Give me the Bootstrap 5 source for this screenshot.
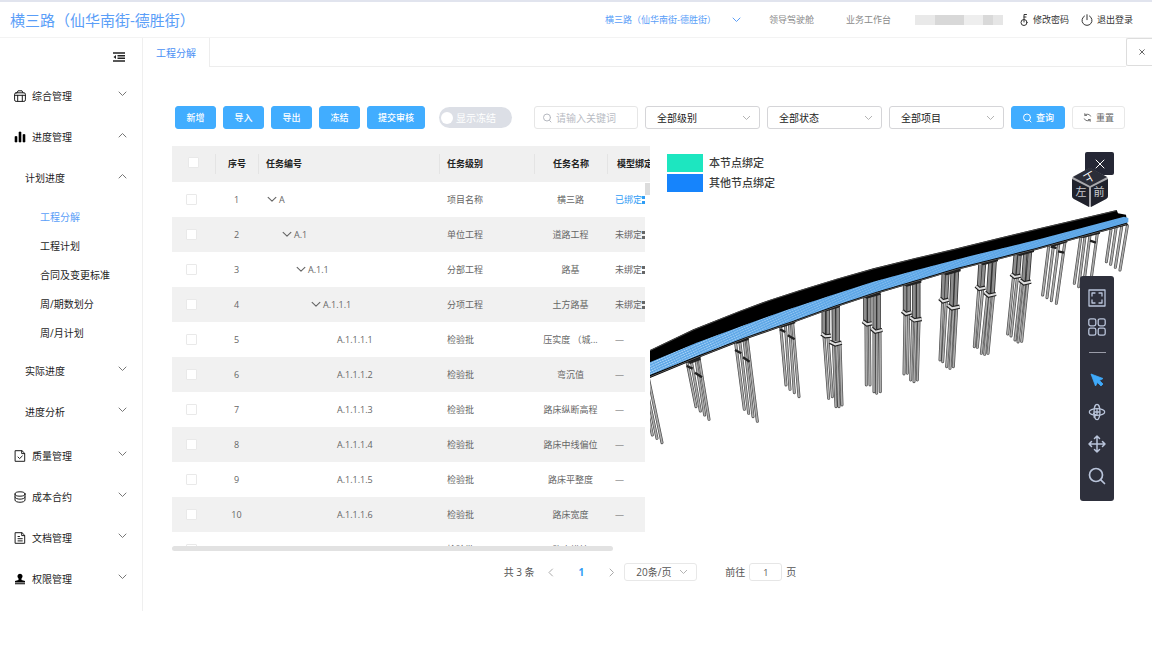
<!DOCTYPE html>
<html lang="zh-CN">
<head>
<meta charset="utf-8">
<meta name="viewport" content="width=device-width, initial-scale=1">
<title>工程分解</title>
<link href="https://cdn.jsdelivr.net/npm/bootstrap@5.3.0/dist/css/bootstrap.min.css" rel="stylesheet">
<style>
  :root { --accent: #5a9ef8; --line: #ededed; --dark: #2e303c; }
  body { font-family: "Open Sans", "Noto Sans CJK SC", sans-serif; font-size: 9px; line-height: 16px; color: #222; background: #fff; }
  a { text-decoration: none; color: inherit; }
  svg { display: block; flex: none; }
  .ico { fill: none; stroke: currentColor; stroke-linecap: round; stroke-linejoin: round; }

  /* top bar */
  .topbar { height: 38px; border-top: 2px solid #e1e4ee; border-bottom: 1px solid #f3f3f3; padding: 0 19px 0 10px; }
  .site-title { font-size: 15px; line-height: 20px; color: var(--accent); margin: 0; font-weight: 400; }
  .topbar-links { color: #8a8a8a; }
  .topbar-links .project { color: var(--accent); }
  .topbar-links .account { color: #333; }
  .masked { width: 88px; height: 10px; background: linear-gradient(90deg, #e9e9e9 0 20px, #d8d8d8 20px 49px, #eee 49px 68px, #d9d9d9 68px 78px, #e6e6e6 78px); }
  .plain { border: 0; background: none; padding: 0; color: inherit; font-size: inherit; line-height: inherit; }

  /* side menu */
  .side { width: 143px; flex: none; border-right: 1px solid #efefef; height: 573px; font-size: 10px; }
  .side-fold { height: 37px; padding-right: 17px; }
  .side-item { height: 41px; padding: 0 15px 0 14px; width: 100%; color: #1d1d1d; gap: 6px; }
  .side-item .chev { margin: 0 0 4px auto; color: #777; }
  .side-item.level2 { padding-left: 25px; }
  .side-leaves { padding: 4px 0 3px; }
  .side-leaves a { height: 29px; padding-left: 40px; color: #1d1d1d; }
  .side-leaves a.current { color: var(--accent); }
  .side-sub { padding-bottom: 3px; }

  /* page tabs */
  .page-main { min-width: 0; }
  .tabs-line { height: 29px; }
  .tab-now { width: 66px; color: #4a90f5; font-size: 10px; }
  .tabs-rest { border: 1px solid var(--line); border-width: 0 0 1px 1px; }
  .tabs-close { width: 26px; height: 28px; border: 1px solid #ddd; border-right: 0; border-radius: 2px 0 0 2px; color: #666; }

  /* toolbar */
  .tools { padding: 39px 27px 0 32px; gap: 7px; }
  .tools .btn { --bs-btn-font-size: 9px; --bs-btn-padding-x: 10px; --bs-btn-padding-y: 0; --bs-btn-border-radius: 3px; --bs-btn-line-height: 16px; height: 23px; min-width: 41px; flex: none; }
  .btn-sky { --bs-btn-bg: #41adff; --bs-btn-border-color: #41adff; --bs-btn-color: #fff; --bs-btn-hover-bg: #2c9ff5; --bs-btn-hover-color: #fff; font-weight: 500; }
  .btn-pale { --bs-btn-bg: #fff; --bs-btn-border-color: #e8e8e8; --bs-btn-color: #666; }
  .freeze { width: 73px; height: 21px; border-radius: 11px; background: #dcdfe6; color: #fff; font-size: 10px; margin: 0 15px 0 7px; padding-left: 2px; gap: 3px; flex: none; }
  .freeze input { appearance: none; width: 12px; height: 12px; border-radius: 50%; background: #fff; margin: 0; }
  .search-box { width: 104px; height: 23px; border: 1px solid #e6e6e6; border-radius: 3px; padding: 0 7px; gap: 4px; color: #b5b8bf; flex: none; }
  .search-box input { border: 0; outline: 0; padding: 0; width: 100%; min-width: 0; font-size: 10px; line-height: 16px; }
  .search-box input::placeholder { color: #b9bcc4; }
  .pick { appearance: none; border: 1px solid #d5d5d8; border-radius: 3px; height: 23px; font-size: 10px; line-height: 16px; padding: 0 20px 0 11px; color: #222; min-width: 0;
    background: #fff url("data:image/svg+xml,%3Csvg xmlns='http://www.w3.org/2000/svg' width='9' height='6' fill='none' stroke='%23b3b3b3'%3E%3Cpath d='M1 1l3.500 3.500L8 1'/%3E%3C/svg%3E") no-repeat right 8px center; }

  /* table and model */
  .work { display: grid; grid-template-columns: minmax(0, 478fr) minmax(0, 502fr); padding: 17px 0 0 29px; }
  .grid-box { height: 405px; overflow: hidden; position: relative; }
  .grid-clip { height: 400px; overflow: hidden; }
  .task-table { table-layout: fixed; width: 505px; border-collapse: collapse; color: #666; }
  .task-table th, .task-table td { padding: 0; height: 35px; white-space: nowrap; overflow: hidden; text-overflow: ellipsis; vertical-align: middle; }
  .task-table th { height: 36px; background: #f0f0f0; color: #222; font-weight: 700; }
  .task-table th > div { border-left: 1px solid #e4e4e4; height: 20px; line-height: 20px; }
  .task-table th:first-child > div { border: 0; }
  .task-table tbody tr:nth-child(even) { background: #f1f1f1; }
  .task-table .lead-7 { padding-left: 7px; }
  .task-table .lead-8 { padding-left: 8px; }
  .task-table .lead-9 { padding-left: 9px; }
  .task-table input { appearance: none; width: 11px; height: 11px; border: 1px solid #e9e9e9; border-radius: 1px; background: #fff; margin: 0 0 0 14px; display: block; }
  .task-table th input { margin: 5px 0 0 16px; }
  .node { display: flex; align-items: center; gap: 2px; padding-left: 9px; }
  .node.d2 { padding-left: 24px; }
  .node.d3 { padding-left: 38px; }
  .node.d4 { padding-left: 53px; }
  .node.d5 { padding-left: 79px; }
  .bound { color: #2f9cf5; }
  .v-track { position: absolute; right: 0; top: 36px; bottom: 0; width: 5px; background: #fff; padding-top: 1px; }
  .v-thumb { width: 5px; height: 12px; background: #dcdcdc; }
  .h-thumb { height: 5px; margin-right: 37px; border-radius: 3px; background: #e2e2e2; }
  .model { position: relative; height: 405px; overflow: hidden; }
  .legend-box { position: absolute; left: 17px; top: 7px; font-size: 11px; font-weight: 500; color: #3d3d3d; }
  .swatch { width: 36px; height: 18px; }
  .swatch.own { background: #1de6c0; }
  .swatch.other { background: #1684fc; }
  .legend-row { gap: 6px; height: 20px; }
  .cube { position: absolute; right: 43px; top: 21px; }
  .model-close { position: absolute; right: 38px; top: 6px; width: 29px; height: 23px; background: #252735; color: #fff; border-radius: 2px; }
  .model-tools { position: absolute; right: 38px; top: 130px; width: 34px; background: var(--dark); border-radius: 3px; padding: 7px 0 9px; color: #b9c4da; }
  .model-tools button { width: 34px; height: 32px; }
  .model-tools button.tight { height: 29px; }
  .model-tools hr { width: 17px; margin: 11px 0; border-top: 1px solid #9a9ca8; opacity: 1; }

  /* pager */
  .pager { padding: 12px 24px 0 29px; font-size: 10px; color: #555; }
  .pager .page-arrow { color: #aaa; width: 12px; height: 16px; }
  .pager .pick { width: 73px; height: 18px; border-color: #e8e8e8; color: #555; }
  .pager .jump { width: 33px; height: 18px; border: 1px solid #e6e6e6; border-radius: 3px; font-size: 9px; text-align: center; color: #555; padding: 0; margin: 0 4px; }
</style>
</head>
<body>
<svg width="0" height="0" class="position-absolute" aria-hidden="true">
  <symbol id="down" viewBox="0 0 9 6"><path class="ico" d="M1 1l3.500 3.500L8 1"/></symbol>
  <symbol id="up" viewBox="0 0 9 6"><path class="ico" d="M1 5l3.500-3.500L8 5"/></symbol>
  <symbol id="dots" viewBox="0 0 8 8"><path fill="currentColor" d="M0 0h3v3H0zM0 5h3v3H0zM5 0h3v3H5zM5 5h3v3H5z"/></symbol>
  <symbol id="glass" viewBox="0 0 10 10"><circle class="ico" cx="5" cy="4.500" r="3.500"/><path class="ico" d="M7.500 7.500L9 9"/></symbol>
</svg>

<header class="topbar d-flex align-items-center justify-content-between">
  <h1 class="site-title">横三路（仙华南街-德胜街）</h1>
  <div class="topbar-links d-flex align-items-center">
    <button class="plain project d-flex align-items-center">横三路（仙华南街-德胜街）
      <svg class="ms-3" width="9" height="6"><use href="#down"/></svg></button>
    <a href="#" class="ms-4 ps-1">领导驾驶舱</a>
    <a href="#" class="ms-4 ps-2">业务工作台</a>
    <span class="masked ms-4 me-3"></span>
    <button class="plain account d-flex align-items-center">
      <svg width="10" height="14" viewBox="0 0 10 14"><g class="ico"><circle cx="5" cy="9.500" r="3"/><path d="M5 9V1.500h2.500M5 4h2"/></g></svg>
      <span class="ms-1">修改密码</span></button>
    <button class="plain account d-flex align-items-center ms-2 ps-1">
      <svg width="12" height="12" viewBox="0 0 12 12"><path class="ico" d="M3.500 2a5 5 0 1 0 5 0M6 .7v5"/></svg>
      <span class="ms-1">退出登录</span></button>
  </div>
</header>

<div class="d-flex">
  <nav class="side" aria-label="主菜单">
    <div class="side-fold d-flex align-items-center justify-content-end">
      <button class="plain" aria-label="收起菜单"><svg width="12" height="10" viewBox="0 0 12 10"><path d="M0 1h12M4.500 3.700H12M4.500 6.300H12M0 9h12" stroke="#222" stroke-width="1.600"/><path d="M3 3v4L.5 5z" fill="#222"/></svg></button>
    </div>
    <button class="plain side-item d-flex align-items-center"><svg width="12" height="12" viewBox="0 0 12 12"><g class="ico"><rect x=".6" y="2.800" width="10.800" height="8.600" rx="1.500"/><path d="M3 2.800L4 .8h4l1 2M.6 5.300h10.800M3.700 5.300V11M8.300 5.300V11"/></g></svg><span>综合管理</span><svg class="chev" width="9" height="6"><use href="#down"/></svg></button>
    <button class="plain side-item d-flex align-items-center"><svg width="12" height="12" viewBox="0 0 12 12"><path d="M1 5.500h2V11H1zM5 1h2v10H5zM9 3.500h2V11H9z" fill="#000" stroke="#000" stroke-width=".6"/></svg><span>进度管理</span><svg class="chev" width="9" height="6"><use href="#up"/></svg></button>
    <div class="side-sub">
      <button class="plain side-item level2 d-flex align-items-center"><span>计划进度</span><svg class="chev" width="9" height="6"><use href="#up"/></svg></button>
      <div class="side-leaves">
        <a href="#" class="current d-flex align-items-center">工程分解</a>
        <a href="#" class="d-flex align-items-center">工程计划</a>
        <a href="#" class="d-flex align-items-center">合同及变更标准</a>
        <a href="#" class="d-flex align-items-center">周/期数划分</a>
        <a href="#" class="d-flex align-items-center">周/月计划</a>
      </div>
      <button class="plain side-item level2 d-flex align-items-center"><span>实际进度</span><svg class="chev" width="9" height="6"><use href="#down"/></svg></button>
      <button class="plain side-item level2 d-flex align-items-center"><span>进度分析</span><svg class="chev" width="9" height="6"><use href="#down"/></svg></button>
    </div>
    <button class="plain side-item d-flex align-items-center"><svg width="12" height="12" viewBox="0 0 12 12"><path class="ico" d="M1.500.7H8L10.700 3.300v8H1.500zM7.700.9v2.700h2.800M4 7l1.600 1.600L8.300 6"/></svg><span>质量管理</span><svg class="chev" width="9" height="6"><use href="#down"/></svg></button>
    <button class="plain side-item d-flex align-items-center"><svg width="12" height="12" viewBox="0 0 12 12"><g class="ico"><ellipse cx="6" cy="3" rx="5" ry="2.200"/><path d="M1 3v6c0 3 10 3 10 0V3M1 6c0 3 10 3 10 0"/></g></svg><span>成本合约</span><svg class="chev" width="9" height="6"><use href="#down"/></svg></button>
    <button class="plain side-item d-flex align-items-center"><svg width="12" height="12" viewBox="0 0 12 12"><path class="ico" d="M1.500.7H8L10.700 3.300v8H1.500zM7.700.9v2.700h2.800M4 4.500h1.500M4 6.700h4.300M4 8.900h4.300"/></svg><span>文档管理</span><svg class="chev" width="9" height="6"><use href="#down"/></svg></button>
    <button class="plain side-item d-flex align-items-center"><svg width="12" height="12" viewBox="0 0 12 12"><path d="M6 .8a2.600 2.600 0 0 1 1.500 4.700V7L11 8v1.500H1V8l3.500-1V5.500A2.600 2.600 0 0 1 6 .8zM1 10.300h10v1H1z" fill="#000"/></svg><span>权限管理</span><svg class="chev" width="9" height="6"><use href="#down"/></svg></button>
  </nav>

  <main class="page-main flex-grow-1">
    <div class="tabs-line d-flex">
      <a href="#" class="tab-now d-flex align-items-center justify-content-center">工程分解</a>
      <div class="tabs-rest flex-grow-1"></div>
      <button class="plain tabs-close d-flex align-items-center justify-content-center ps-1" aria-label="关闭标签"><svg width="6" height="6" viewBox="0 0 6 6"><path class="ico" d="M.7.7l4.600 4.600M5.300.7L.7 5.300"/></svg></button>
    </div>

    <form class="tools d-flex align-items-center" onsubmit="return false">
      <button type="button" class="btn btn-sky">新增</button>
      <button type="button" class="btn btn-sky">导入</button>
      <button type="button" class="btn btn-sky">导出</button>
      <button type="button" class="btn btn-sky">冻结</button>
      <button type="button" class="btn btn-sky">提交审核</button>
      <label class="freeze d-flex align-items-center"><input type="checkbox" role="switch"><span>显示冻结</span></label>
      <label class="search-box d-flex align-items-center"><svg width="10" height="10"><use href="#glass"/></svg><input type="text" placeholder="请输入关键词" aria-label="关键词"></label>
      <select class="pick flex-fill" aria-label="级别"><option>全部级别</option></select>
      <select class="pick flex-fill" aria-label="状态"><option>全部状态</option></select>
      <select class="pick flex-fill" aria-label="项目"><option>全部项目</option></select>
      <button type="submit" class="btn btn-sky d-flex align-items-center gap-1"><svg width="10" height="10"><use href="#glass"/></svg>查询</button>
      <button type="reset" class="btn btn-pale d-flex align-items-center gap-1"><svg width="9" height="9" viewBox="0 0 10 10"><path class="ico" d="M1.500 6.500A3.800 3.800 0 0 0 8 7.500M8.500 3.500A3.800 3.800 0 0 0 2 2.500M2 .7v2h2M8 9.300v-2H6"/></svg>重置</button>
    </form>

    <div class="work">
      <div class="grid-box">
        <div class="grid-clip">
        <table class="task-table">
          <colgroup><col style="width:43px"><col style="width:43px"><col style="width:181px"><col style="width:95px"><col style="width:73px"><col style="width:70px"></colgroup>
          <thead><tr>
            <th><div><input type="checkbox" aria-label="全选"></div></th>
            <th class="text-center"><div>序号</div></th>
            <th><div class="lead-7">任务编号</div></th>
            <th><div class="lead-7">任务级别</div></th>
            <th class="text-center"><div>任务名称</div></th>
            <th><div class="lead-9">模型绑定</div></th>
          </tr></thead>
          <tbody>
            <tr><td><input type="checkbox" aria-label="选择 1"></td><td class="text-center">1</td><td><div class="node"><svg width="10" height="7" viewBox="0 0 9 6"><use href="#down"/></svg>A</div></td><td class="lead-8">项目名称</td><td class="text-center">横三路</td><td class="lead-8"><a href="#" class="bound d-flex align-items-center">已绑定<svg width="8" height="8"><use href="#dots"/></svg></a></td></tr>
            <tr><td><input type="checkbox" aria-label="选择 2"></td><td class="text-center">2</td><td><div class="node d2"><svg width="10" height="7" viewBox="0 0 9 6"><use href="#down"/></svg>A.1</div></td><td class="lead-8">单位工程</td><td class="text-center">道路工程</td><td class="lead-8"><a href="#" class="d-flex align-items-center">未绑定<svg width="8" height="8"><use href="#dots"/></svg></a></td></tr>
            <tr><td><input type="checkbox" aria-label="选择 3"></td><td class="text-center">3</td><td><div class="node d3"><svg width="10" height="7" viewBox="0 0 9 6"><use href="#down"/></svg>A.1.1</div></td><td class="lead-8">分部工程</td><td class="text-center">路基</td><td class="lead-8"><a href="#" class="d-flex align-items-center">未绑定<svg width="8" height="8"><use href="#dots"/></svg></a></td></tr>
            <tr><td><input type="checkbox" aria-label="选择 4"></td><td class="text-center">4</td><td><div class="node d4"><svg width="10" height="7" viewBox="0 0 9 6"><use href="#down"/></svg>A.1.1.1</div></td><td class="lead-8">分项工程</td><td class="text-center">土方路基</td><td class="lead-8"><a href="#" class="d-flex align-items-center">未绑定<svg width="8" height="8"><use href="#dots"/></svg></a></td></tr>
            <tr><td><input type="checkbox" aria-label="选择 5"></td><td class="text-center">5</td><td><div class="node d5">A.1.1.1.1</div></td><td class="lead-8">检验批</td><td class="text-center">压实度 （城...</td><td class="lead-8">—</td></tr>
            <tr><td><input type="checkbox" aria-label="选择 6"></td><td class="text-center">6</td><td><div class="node d5">A.1.1.1.2</div></td><td class="lead-8">检验批</td><td class="text-center">弯沉值</td><td class="lead-8">—</td></tr>
            <tr><td><input type="checkbox" aria-label="选择 7"></td><td class="text-center">7</td><td><div class="node d5">A.1.1.1.3</div></td><td class="lead-8">检验批</td><td class="text-center">路床纵断高程</td><td class="lead-8">—</td></tr>
            <tr><td><input type="checkbox" aria-label="选择 8"></td><td class="text-center">8</td><td><div class="node d5">A.1.1.1.4</div></td><td class="lead-8">检验批</td><td class="text-center">路床中线偏位</td><td class="lead-8">—</td></tr>
            <tr><td><input type="checkbox" aria-label="选择 9"></td><td class="text-center">9</td><td><div class="node d5">A.1.1.1.5</div></td><td class="lead-8">检验批</td><td class="text-center">路床平整度</td><td class="lead-8">—</td></tr>
            <tr><td><input type="checkbox" aria-label="选择 10"></td><td class="text-center">10</td><td><div class="node d5">A.1.1.1.6</div></td><td class="lead-8">检验批</td><td class="text-center">路床宽度</td><td class="lead-8">—</td></tr>
            <tr><td><input type="checkbox" aria-label="选择 11"></td><td></td><td></td><td class="lead-8">检验批</td><td class="text-center">路床横坡</td><td></td></tr>
          </tbody>
        </table>
        </div>
        <div class="v-track"><div class="v-thumb"></div></div>
        <div class="h-thumb"></div>
      </div>

      <section class="model" aria-label="模型">
        <svg width="100%" height="405" viewBox="650 146 502 405" preserveAspectRatio="xMinYMin meet">
          <defs>
            <path id="piles" d="M20 510L66 728M22 580L51 715M22 630L37 705
              M142 490L168 620M155 490L181 633M168 480L194 645M178 480L207 658
              M287 430L313 628M300 430L326 640M312 420L339 650M322 420L352 664
              M422 380L438 555M436 375L450 568M448 370L463 578M458 370L477 590
              M552 410L566 595M564 415L577 590M580 430L588 620M590 435L597 620M600 430L606 615
              M678 375L679 555M688 375L690 555M702 395V575M711 395L710 580M720 395L721 575
              M795 345L792 522M806 345L802 520M818 365L812 540M828 365L822 545M837 365L832 540
              M908 305L900 480M919 305L908 485M932 325L920 500M941 325L930 505M950 325L940 500
              M1016 270L1003 440M1028 270L1012 442M1042 290L1024 460M1050 290L1034 463M1060 290L1044 460
              M1120 235L1103 402M1132 235L1113 408M1144 250L1125 420M1154 250L1134 426M1163 250L1145 424
              M1226 140L1208 285M1240 140L1221 293M1256 135L1234 302M1275 125L1249 310
              M1322 115L1303 250M1335 110L1316 260M1350 105L1330 262M1372 100L1350 262
              M1413 90L1399 185M1428 85L1412 193M1445 80L1426 202M1462 78L1440 210"/>
            <path id="columns" d="M551 330V402M564 328V402M581 324L582 424M593 322V424
              M676 290V366M688 288V366M704 284V388M716 282V388M795 255V335M806 253V335M823 250V354M835 248V354
              M911 223L908 298M922 220L918 298M938 215L934 318M951 212L946 318M1021 195L1017 260M1032 192L1027 260M1051 187L1045 280M1064 184L1058 280
              M1127 165L1122 225M1139 162L1134 225M1156 157L1150 243M1170 154L1163 243"/>
            <path id="caps" d="M545 401L556 409L573 407M569 425L586 433L605 428M669 364L681 373L696 370M694 385L706 395L727 390M787 333L798 342L815 337M810 352L823 361L845 357M899 295L909 304L926 299M923 315L936 325L959 320M1008 258L1018 267L1036 263M1034 277L1046 287L1068 282M1113 222L1124 231L1142 227M1139 240L1152 250L1173 245"/>
            <path id="braces" d="M140 498L158 506M165 518L186 532M285 450L304 460M309 472L329 485M420 388L436 396M443 406L464 418M1232 140L1250 144M1254 154L1272 158M1350 122L1368 128"/>
            <path id="girder" d="M30 487L170 428L300 380L440 330L570 287L700 245L830 210L1000 166L1200 117L1452 50L1465 54V67L1370 94L1180 146L1070 174L950 204L840 237L710 275L590 315L460 362L320 410L180 464L30 525z"/>
            <pattern id="mesh" width="8" height="7" patternUnits="userSpaceOnUse" patternTransform="rotate(-25)"><path d="M0 3H6" stroke="#c4e4ff" stroke-width="2.500"/></pattern>
            <linearGradient id="fadeMesh"><stop offset="0" stop-color="#fff"/><stop offset=".4" stop-color="#888"/><stop offset="1" stop-color="#222"/></linearGradient>
            <mask id="meshMask" maskUnits="userSpaceOnUse" x="30" y="0" width="1440" height="550"><rect x="30" y="0" width="1440" height="550" fill="url(#fadeMesh)"/></mask>
            <clipPath id="edge"><rect x="30" y="0" width="1476" height="760"/></clipPath>
          </defs>
          <g transform="translate(640 200) scale(.33333)" clip-path="url(#edge)" fill="none">
            <use href="#piles" stroke="#4a4a4a" stroke-width="9" stroke-linecap="round"/>
            <use href="#piles" stroke="#acacac" stroke-width="5" stroke-linecap="round"/>
            <use href="#columns" stroke="#333" stroke-width="13"/>
            <use href="#columns" stroke="#8d8d8d" stroke-width="8"/>
            <use href="#caps" stroke="#222" stroke-width="13"/>
            <use href="#caps" stroke="#ddd" stroke-width="6"/>
            <use href="#braces" stroke="#222" stroke-width="7"/>
            <path fill="#222" d="M138 482L182 468V480L150 492zM286 424L326 410V420L290 432zM419 374L466 358V370L422 384zM550 330L600 312V322L560 334zM672 290L722 272V284L680 296zM792 254L844 237V248L800 260zM909 222L962 204V214L920 226zM1019 192L1074 174V184L1030 196zM1126 164L1182 147V156L1140 168zM1229 137L1282 120V127L1240 140zM1319 112L1380 93V101L1330 114z"/>
            <path fill="#000" d="M30 450L160 388L300 332L390 299L480 270L590 236L700 205L825 174L950 145L1075 114L1200 84L1430 30L1434 40L1458 44L1462 72L1466 74L1370 100L1180 152L1070 180L950 210L840 243L710 281L590 321L460 368L320 417L180 472L30 534z"/>
            <path stroke="#666" stroke-width="2" d="M30 452L160 390L300 334L390 301L480 272L590 238L700 207L825 176L950 147L1075 116L1200 86L1430 32"/>
            <use href="#girder" fill="#5ba5e6"/>
            <g mask="url(#meshMask)"><use href="#girder" fill="url(#mesh)"/></g>
            <path stroke="#888" stroke-width="2" d="M30 530L180 469L320 414L460 366L590 319L710 279L840 241L950 208L1070 178L1180 150L1370 98L1464 71"/>
          </g>
        </svg>

        <div class="legend-box">
          <div class="legend-row d-flex align-items-center"><span class="swatch own"></span><span>本节点绑定</span></div>
          <div class="legend-row d-flex align-items-center"><span class="swatch other"></span><span>其他节点绑定</span></div>
        </div>

        <button class="plain model-close d-flex align-items-center justify-content-center" aria-label="关闭模型"><svg width="10" height="10" viewBox="0 0 10 10"><path class="ico" d="M1 1l8 8M9 1L1 9"/></svg></button>
        <svg class="cube" width="38" height="41" viewBox="0 0 38 41" font-size="11" fill="#c8c8cc" text-anchor="middle">
          <path d="M19 1L36 10Q37 11 37 12V29Q37 31 35 32L19 40L3 32Q1 31 1 29V12Q1 10 3 9z" fill="#a9a9ad"/>
          <path d="M18 1Q19 .5 20 1L36 10L19 19L2 10z" fill="#2b2d38"/>
          <path d="M1 12L18 20.500V40L3 32Q1 31 1 29z" fill="#20222c"/>
          <path d="M37 12L20 20.500V40L35 32Q37 31 37 29z" fill="#20222c"/>
          <text x="10" y="29">左</text><text x="28" y="29">前</text>
          <text transform="translate(18 9) rotate(150)" x="0" y="3" font-size="11" fill="#fff">上</text>
        </svg>

        <div class="model-tools d-flex flex-column align-items-center">
          <button class="plain tight d-flex align-items-center justify-content-center" aria-label="全屏"><svg width="18" height="18" viewBox="0 0 18 18"><path class="ico" stroke-width="1.300" d="M1 1h16v16H1zM4 7V4h3M11 4h3v3M14 11v3h-3M7 14H4v-3"/></svg></button>
          <button class="plain tight d-flex align-items-center justify-content-center" aria-label="视图"><svg width="18" height="18" viewBox="0 0 18 18"><g class="ico" stroke-width="1.300"><rect x=".8" y=".8" width="7" height="7" rx="1.800"/><rect x="10.200" y=".8" width="7" height="7" rx="1.800"/><rect x=".8" y="10.200" width="7" height="7" rx="1.800"/><rect x="10.200" y="10.200" width="7" height="7" rx="1.800"/></g></svg></button>
          <hr>
          <button class="plain d-flex align-items-center justify-content-center" aria-label="选择"><svg width="14" height="14" viewBox="0 0 14 14"><path d="M1 1l12 4.500-3.500 2L13 11l-2 2-3.500-3.500-2 3.500z" fill="#3fa9fa" stroke="#3fa9fa" stroke-width=".8"/></svg></button>
          <button class="plain d-flex align-items-center justify-content-center" aria-label="旋转"><svg width="18" height="18" viewBox="0 0 18 18"><g class="ico" stroke-width="1.300"><ellipse cx="9" cy="9" rx="3" ry="7.700"/><ellipse cx="9" cy="9" rx="7.700" ry="3.400"/><path d="M9 6.500v5M6.500 9h5M5.500 10.500L8 12l-2 2"/></g></svg></button>
          <button class="plain d-flex align-items-center justify-content-center" aria-label="平移"><svg width="18" height="18" viewBox="0 0 18 18"><path class="ico" stroke-width="1.500" d="M9 1v16M1 9h16M6.500 3.500L9 1l2.500 2.500M6.500 14.500L9 17l2.500-2.500M3.500 6.500L1 9l2.500 2.500M14.500 6.500L17 9l-2.500 2.500"/></svg></button>
          <button class="plain d-flex align-items-center justify-content-center" aria-label="缩放"><svg width="18" height="18" viewBox="0 0 18 18"><g class="ico" stroke-width="1.700"><circle cx="8" cy="8" r="6.500"/><path d="M12.800 12.800L16.500 16.500"/></g></svg></button>
        </div>
      </section>
    </div>

    <div class="pager d-flex align-items-center justify-content-center">
      <span>共 3 条</span>
      <button class="plain page-arrow d-flex align-items-center justify-content-center ms-2 me-4 ps-1" aria-label="上一页"><svg width="6" height="9" viewBox="0 0 6 9"><path class="ico" d="M4.500 1L1 4.500 4.500 8"/></svg></button>
      <a href="#" class="fw-bold bound pe-1">1</a>
      <button class="plain page-arrow d-flex align-items-center justify-content-center ms-3 me-2 ps-1" aria-label="下一页"><svg width="6" height="9" viewBox="0 0 6 9"><path class="ico" d="M1 1l3.500 3.500L1 8"/></svg></button>
      <select class="pick" aria-label="每页条数"><option>20条/页</option></select>
      <label class="d-flex align-items-center ms-4 ps-1">前往<input class="jump" type="text" value="1">页</label>
    </div>
  </main>
</div>
<script src="https://cdn.jsdelivr.net/npm/bootstrap@5.3.0/dist/js/bootstrap.bundle.min.js"></script>
</body>
</html>
